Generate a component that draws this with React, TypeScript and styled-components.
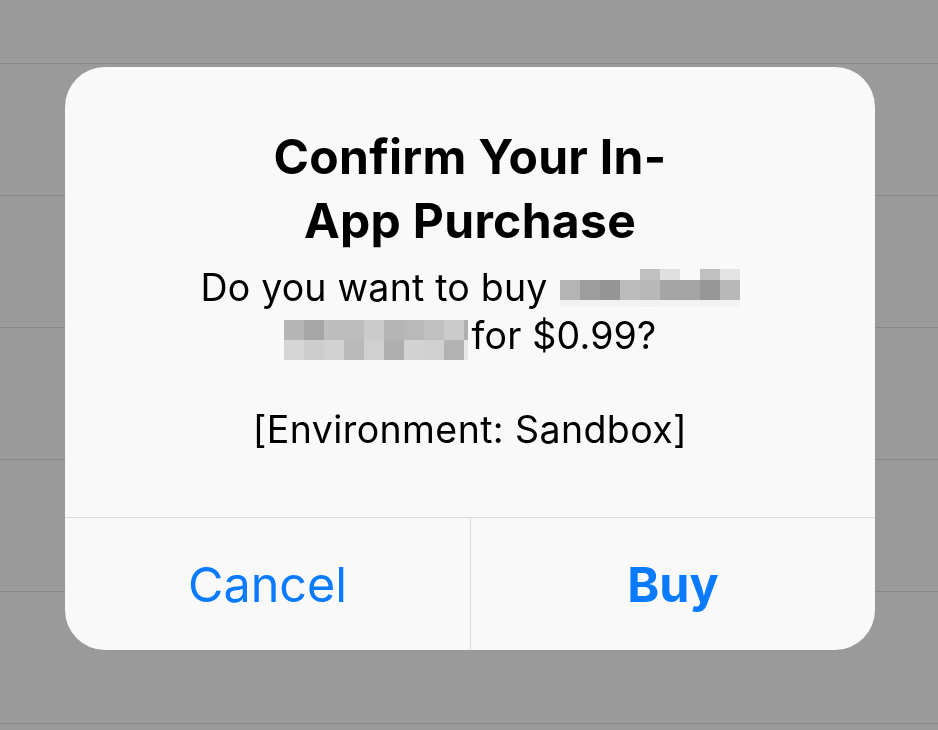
import React from "react";
import styled, { createGlobalStyle } from "styled-components";

const Global = createGlobalStyle`
  html, body { margin: 0; padding: 0; }
  body {
    width: 938px;
    height: 730px;
    overflow: hidden;
    background: #9a9a9a;
    font-family: Inter, "Noto Sans", "Liberation Sans", sans-serif;
  }
`;

const List = styled.div`
  display: flex;
  flex-direction: column;
`;

const Row = styled.div<{ $first?: boolean }>`
  height: ${(p) => (p.$first ? 63 : 131)}px;
  border-bottom: 1px solid #878787;
  background: #9a9a9a;
`;

const Overlay = styled.div`
  position: fixed;
  inset: 0;
  display: flex;
  justify-content: center;
  align-items: flex-start;
  padding: 67px 0 0 2px;
`;

const Dialog = styled.div`
  width: 810px;
  background: #f9f9f9;
  border-radius: 40px;
  overflow: hidden;
  display: flex;
  flex-direction: column;
  color: #000;
`;

const Body = styled.div`
  height: 451px;
  box-sizing: border-box;
  padding: 58px 40px 0;
  display: flex;
  flex-direction: column;
  align-items: center;
  text-align: center;
  border-bottom: 1px solid #dadada;
`;

const Title = styled.h1`
  margin: 0;
  width: 420px;
  font-size: 48px;
  line-height: 64px;
  font-weight: 700;
  letter-spacing: 0.3px;
`;

const Message = styled.p`
  margin: 11px 0 0;
  font-size: 37.5px;
  line-height: 48px;
  font-weight: 400;
  letter-spacing: 0.2px;
`;

const Env = styled.p`
  margin: 46px 0 0;
  font-size: 37.5px;
  line-height: 48px;
  font-weight: 400;
  letter-spacing: 0.4px;
`;

const MosaicBox = styled.span<{ $align: number; $ml: number; $mr: number }>`
  display: inline-block;
  overflow: hidden;
  vertical-align: ${(p) => -p.$align}px;
  margin-left: ${(p) => p.$ml}px;
  margin-right: ${(p) => p.$mr}px;
`;

const MosaicGrid = styled.span<{ $cols: string; $rows: string }>`
  display: grid;
  grid-template-columns: ${(p) => p.$cols};
  grid-template-rows: ${(p) => p.$rows};
`;

const Cell = styled.span<{ $c: string }>`
  background: ${(p) => p.$c};
`;

const Actions = styled.div`
  display: grid;
  grid-template-columns: 1fr 1fr;
  height: 132px;
`;

const Action = styled.button<{ $bold?: boolean }>`
  border: 0;
  background: transparent;
  margin: 0;
  padding: 0;
  font-family: inherit;
  font-size: 48.5px;
  font-weight: ${(p) => (p.$bold ? 700 : 400)};
  color: #0a7aff;
  display: flex;
  align-items: center;
  justify-content: center;
  & + & {
    border-left: 1px solid #dadada;
  }
`;

const W = "#f9f9f9";
const mosaic1: string[][] = [
  [W, W, W, W, "#c0c0c0", "#e0e0e0", W, "#c0c0c0", "#e3e3e3"],
  ["#b4b4b4", "#9d9d9d", "#959595", "#bcbcbc", "#b8b8b8", "#a5a5a5", "#a5a5a5", "#979797", "#b8b8b8"],
  ["#f2f2f2", "#f3f3f3", "#f2f2f2", "#f3f3f3", "#f1f1f1", "#f3f3f3", "#f3f3f3", "#f2f2f2", "#f3f3f3"],
];
const mosaic2: string[][] = [
  ["#b5b5b5", "#a6a6a6", "#bebebe", "#bdbdbd", "#cbcbcb", "#b5b5b5", "#b9b9b9", "#c0c0c0", "#cbcbcb", "#b0b0b0"],
  ["#d6d6d6", "#cdcdcd", "#d2d2d2", "#b9b9b9", "#d0d0d0", "#b0b0b0", "#d3d3d3", "#d0d0d0", "#b3b3b3", "#e8e8e8"],
];

function Pixels({
  data,
  cols,
  rows,
  align,
  ml = 0,
  mr = 0,
}: {
  data: string[][];
  cols: string;
  rows: string;
  align: number;
  ml?: number;
  mr?: number;
}) {
  return (
    <MosaicBox $align={align} $ml={ml} $mr={mr} aria-hidden>
      <MosaicGrid $cols={cols} $rows={rows}>
        {data.flatMap((r, i) => r.map((c, j) => <Cell key={`${i}-${j}`} $c={c} />))}
      </MosaicGrid>
    </MosaicBox>
  );
}

export default function App() {
  return (
    <>
      <Global />
      <List>
        <Row $first />
        <Row />
        <Row />
        <Row />
        <Row />
        <Row />
      </List>
      <Overlay>
        <Dialog>
          <Body>
            <Title>Confirm Your In-App Purchase</Title>
            <Message>
              Do you want to buy
              <Pixels data={mosaic1} cols="repeat(9, 20px)" rows="11px 20px 7px" align={6} ml={12} />
              <br />
              <Pixels data={mosaic2} cols="repeat(9, 20px) 4px" rows="20px 20px" align={11} mr={4} />
              for $0.99?
            </Message>
            <Env>[Environment: Sandbox]</Env>
          </Body>
          <Actions>
            <Action>Cancel</Action>
            <Action $bold>Buy</Action>
          </Actions>
        </Dialog>
      </Overlay>
    </>
  );
}
